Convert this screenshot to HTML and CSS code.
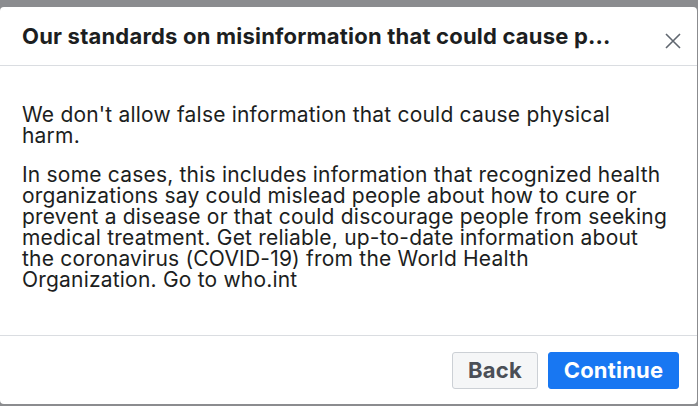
FILE: index.html
```html
<!DOCTYPE html>
<html>
<head>
<meta charset="utf-8">
<link rel="stylesheet" href="styles.css">
</head>
<body>
<div class="backdrop">
  <div class="modal">
    <div class="modal-header">
      <h1 class="title" title="Our standards on misinformation that could cause physical harm">Our standards on misinformation that could cause p...</h1>
      <button class="close" aria-label="Close">
        <svg width="16" height="16" viewBox="0 0 16 16"><path d="M1 1 L15 15 M15 1 L1 15" stroke="#606770" stroke-width="1.6" fill="none"/></svg>
      </button>
    </div>
    <div class="modal-body">
      <p>We don't allow false information that could cause physical harm.</p>
      <p>In some cases, this includes information that recognized health organizations say could mislead people about how to cure or prevent a disease or that could discourage people from seeking medical treatment. Get reliable, up-to-date information about the coronavirus (COVID-19) from the World Health<br>Organization. Go to who.int</p>
    </div>
    <div class="modal-footer">
      <button class="btn btn-back">Back</button>
      <button class="btn btn-continue">Continue</button>
    </div>
  </div>
</div>
</body>
</html>
```
FILE: styles.css
```css
html, body {
  margin: 0;
  padding: 0;
}
body {
  width: 698px;
  height: 406px;
  overflow: hidden;
  background: #8b8c8f;
  font-family: Inter, "Liberation Sans", Arial, sans-serif;
  color: #1c1e21;
}
.backdrop {
  padding-top: 7px;
}
.modal {
  width: 697px;
  height: 397px;
  background: #fff;
  border-radius: 4px;
  display: flex;
  flex-direction: column;
}
.modal-header {
  height: 58px;
  border-bottom: 1px solid #dadde1;
  display: flex;
  align-items: center;
  padding-left: 22px;
  padding-right: 16px;
}
.title {
  margin: 0;
  font-size: 22px;
  letter-spacing: 0.2px;
  font-weight: bold;
  white-space: nowrap;
}
.close {
  margin-left: auto;
  margin-top: 10px;
  background: none;
  border: 0;
  padding: 0;
  width: 16px;
  height: 16px;
  display: flex;
}
.modal-body {
  flex: 1;
  padding: 38px 27px 0 22px;
  border-bottom: 1px solid #dadde1;
}
.modal-body p {
  margin: 0 0 18px 0;
  font-size: 21px;
  letter-spacing: 0.2px;
  line-height: 21px;
}
.modal-footer {
  height: 68px;
  display: flex;
  align-items: center;
  justify-content: flex-end;
  gap: 10px;
  padding-right: 18px;
}
.btn {
  height: 37px;
  border-radius: 3px;
  font-family: Inter, "Liberation Sans", Arial, sans-serif;
  font-size: 22px;
  letter-spacing: 0.2px;
  font-weight: bold;
  padding: 0;
}
.btn-back {
  width: 86px;
  background: #f5f6f7;
  border: 1px solid #ccd0d5;
  color: #4b4f56;
}
.btn-continue {
  width: 131px;
  background: #1877f2;
  border: 1px solid #1877f2;
  color: #fff;
}
```
